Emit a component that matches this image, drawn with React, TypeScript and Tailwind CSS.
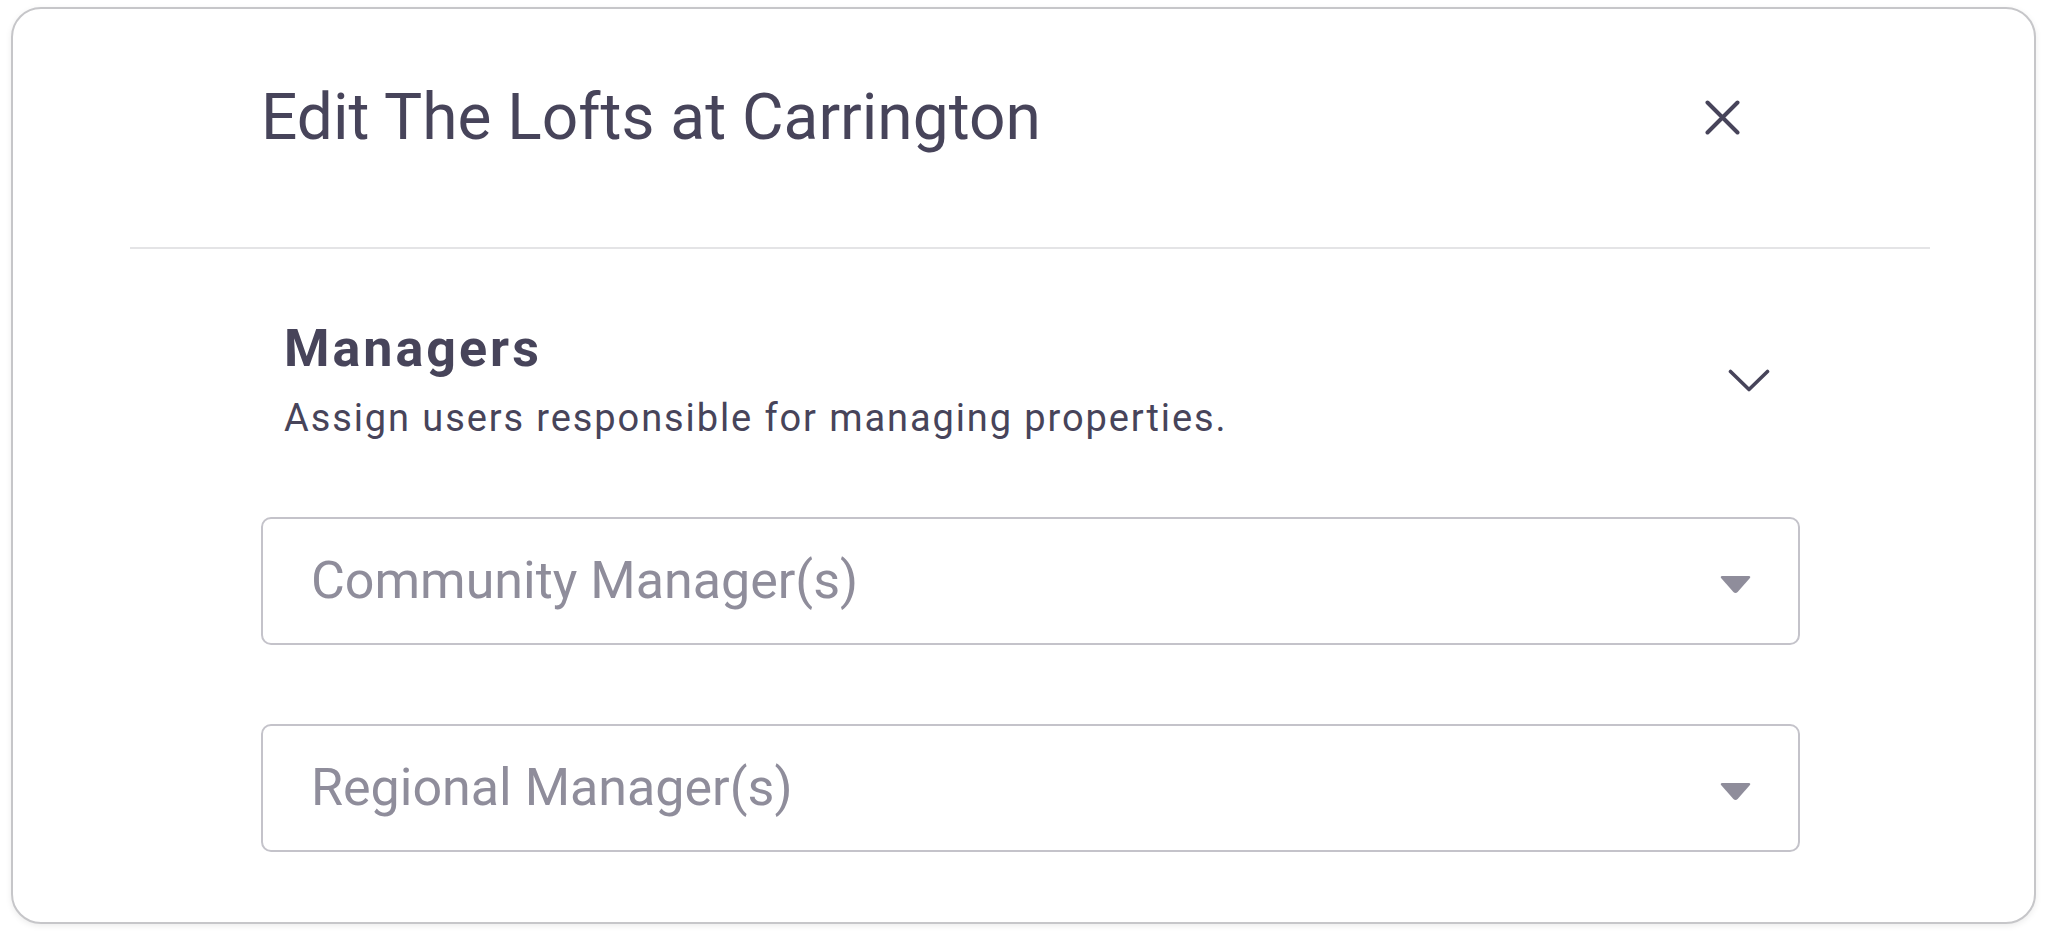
import React from 'react';

const CloseIcon = () => (
  <svg width="35" height="35" viewBox="0 0 35 35" fill="none" className="shrink-0">
    <path d="M2.5 2.5 L32.5 32.5 M32.5 2.5 L2.5 32.5" stroke="#47445a" strokeWidth="4" strokeLinecap="round" />
  </svg>
);

const ChevronDown = () => (
  <svg width="42" height="23" viewBox="0 0 42 23" fill="none" className="shrink-0">
    <path d="M2.5 2.5 L21 20.5 L39.5 2.5" stroke="#47445a" strokeWidth="3.6" strokeLinecap="round" strokeLinejoin="round" />
  </svg>
);

const Caret = () => (
  <svg width="33" height="19" viewBox="0 0 33 19" fill="none" className="shrink-0">
    <path
      d="M3.5 1 H29.5 Q32.5 1 30.5 3.6 L18.6 17 Q16.5 19.2 14.4 17 L2.5 3.6 Q0.5 1 3.5 1 Z"
      fill="#8f8d9b"
    />
  </svg>
);

function SelectField({ placeholder }: { placeholder: string }) {
  return (
    <button
      type="button"
      className="flex h-[128px] w-full items-center justify-between rounded-[10px] border-2 border-[#c4c3ca] bg-white pl-[48px] pr-[46px] text-left"
    >
      <span className="text-[52px] leading-[60px] text-[#8f8d9b]">{placeholder}</span>
      <span className="mt-[6px]">
        <Caret />
      </span>
    </button>
  );
}

export default function App() {
  return (
    <div className="min-h-screen bg-white pl-[11px] pt-[7px]" style={{ fontFamily: 'Roboto, "Noto Sans", sans-serif' }}>
      <div className="w-[2025px] rounded-[30px] border-2 border-[#c6c6c9] bg-white shadow-[0_2px_6px_rgba(0,0,0,0.08)]">
        {/* Header */}
        <div className="flex items-center justify-between pl-[248px] pr-[294px] pt-[71px]">
          <h1 className="text-[64px] font-normal leading-[75px] text-[#47445a]">Edit The Lofts at Carrington</h1>
          <CloseIcon />
        </div>

        <div className="ml-[117px] mr-[104px] mt-[92px] h-[2px] bg-[#e4e4e6]" />

        {/* Managers section */}
        <div className="flex items-center justify-between pl-[271px] pr-[264px] pt-[72px]">
          <div className="flex flex-col gap-[20px]">
            <h2 className="text-[52px] font-bold leading-[56px] tracking-[3px] text-[#47445a]">Managers</h2>
            <p className="text-[38px] leading-[42px] tracking-[1.9px] text-[#47445a]">
              Assign users responsible for managing properties.
            </p>
          </div>
          <ChevronDown />
        </div>

        <div className="flex flex-col gap-[79px] pb-[70px] pl-[248px] pr-[234px] pt-[78px]">
          <SelectField placeholder="Community Manager(s)" />
          <SelectField placeholder="Regional Manager(s)" />
        </div>
      </div>
    </div>
  );
}
